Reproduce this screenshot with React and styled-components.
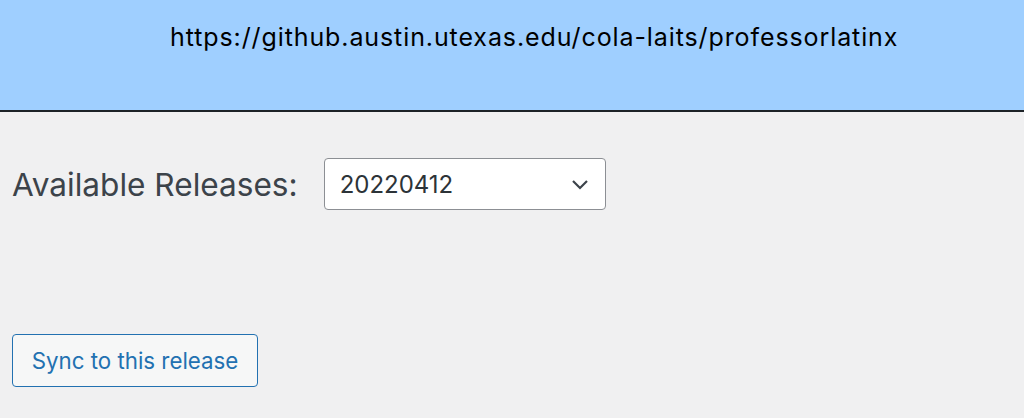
import React from 'react';
import styled, { createGlobalStyle } from 'styled-components';

const GlobalStyle = createGlobalStyle`
  html, body {
    margin: 0;
    padding: 0;
    background: #f0f0f1;
    font-family: Inter, "Liberation Sans", Arial, sans-serif;
  }
`;

const Page = styled.div`
  width: 1024px;
  height: 418px;
  background: #f0f0f1;
  overflow: hidden;
`;

const Header = styled.div`
  height: 112px;
  background: #9fcfff;
  border-bottom: 2px solid #1d2327;
  box-sizing: border-box;
  padding: 22px 0 0 170px;
  font-size: 25px;
  letter-spacing: 0.9px;
  line-height: 30px;
  color: #000;
`;

const Body = styled.div`
  padding: 46px 12px 0;
`;

const Row = styled.div`
  display: flex;
  align-items: center;
  gap: 26px;
`;

const Label = styled.label`
  font-size: 31.6px;
  color: #3c434a;
`;

const SelectBox = styled.div`
  width: 282px;
  height: 52px;
  box-sizing: border-box;
  border: 1px solid #8c8f94;
  border-radius: 4px;
  background: #fff;
  display: flex;
  align-items: center;
  justify-content: space-between;
  padding: 0 16px 0 15px;
  font-size: 24px;
  color: #2c3338;
`;

const Button = styled.button`
  margin-top: 124px;
  height: 53px;
  width: 246px;
  box-sizing: border-box;
  border: 1.5px solid #2271b1;
  border-radius: 4px;
  background: #f6f7f7;
  color: #2271b1;
  font-family: Inter, "Liberation Sans", Arial, sans-serif;
  font-size: 22.3px;
  padding: 0;
  display: block;
`;

const Chevron = () => (
  <svg width="18" height="12" viewBox="0 0 18 12">
    <path d="M2 3 L9 10 L16 3" fill="none" stroke="#3c434a" strokeWidth="2.2" />
  </svg>
);

export default function App() {
  return (
    <Page>
      <GlobalStyle />
      <Header>https://github.austin.utexas.edu/cola-laits/professorlatinx</Header>
      <Body>
        <Row>
          <Label>Available Releases:</Label>
          <SelectBox>
            <span>20220412</span>
            <Chevron />
          </SelectBox>
        </Row>
        <Button>Sync to this release</Button>
      </Body>
    </Page>
  );
}
